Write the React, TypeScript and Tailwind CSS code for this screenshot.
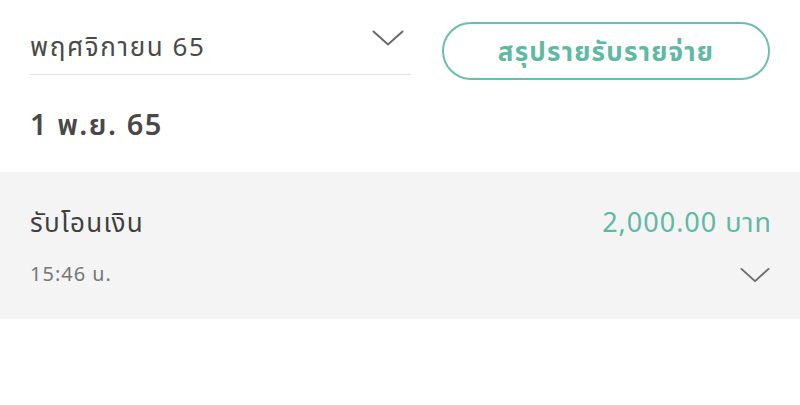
import React from "react";

function Chevron({ className }: { className?: string }) {
  return (
    <svg className={className} viewBox="0 0 32 16" fill="none" stroke="#6b6b6b" strokeWidth="2" strokeLinecap="round" strokeLinejoin="round">
      <path d="M1.5 1.5 L16 14.5 L30.5 1.5" />
    </svg>
  );
}

export default function App() {
  return (
    <div className="w-[800px] h-[405px] bg-white" style={{ fontFamily: '"Noto Sans", "Noto Sans Thai", sans-serif' }}>
      <div className="flex items-start px-[30px] pt-[22px] gap-[31px]">
        <div className="w-[381px] h-[53px] border-b border-[#e2e2e2] flex items-start justify-between">
          <span className="text-[26px] leading-[48px] tracking-[1.6px] text-[#4a4a4a]">พฤศจิกายน 65</span>
          <Chevron className="w-[32px] h-[16px] mt-[8px] mr-[7px]" />
        </div>
        <button className="w-[328px] h-[58px] rounded-full border-2 border-[#6cbfac] text-[#5fb9a3] text-[26px] tracking-[1.2px] font-bold flex items-center justify-center">
          สรุปรายรับรายจ่าย
        </button>
      </div>
      <div className="px-[30px] pt-[24px] h-[92px]">
        <div className="text-[29px] font-semibold tracking-[1.5px] text-[#484848] leading-[40px]">1 พ.ย. 65</div>
      </div>
      <div className="bg-[#f4f4f4] h-[147px] px-[30px] pt-[28px]">
        <div className="flex justify-between items-center">
          <span className="text-[26px] tracking-[1.3px] text-[#3f3f3f] leading-[44px]">รับโอนเงิน</span>
          <span className="text-[27px] tracking-[1px] text-[#5fb9a3] leading-[44px] -mr-[2px]">2,000.00 บาท</span>
        </div>
        <div className="flex justify-between items-center mt-[14px]">
          <span className="text-[20px] tracking-[1px] text-[#777] leading-[32px]">15:46 น.</span>
          <Chevron className="w-[30px] h-[16px] mt-[2px]" />
        </div>
      </div>
    </div>
  );
}
